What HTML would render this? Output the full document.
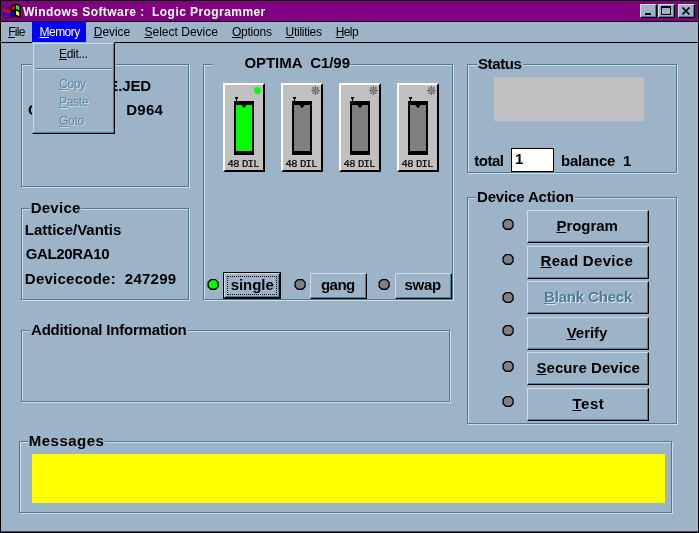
<!DOCTYPE html><html><head><meta charset="utf-8"><title>Windows Software : Logic Programmer</title><style>
html,body{margin:0;padding:0}
body{width:699px;height:533px;background:#000;position:relative;overflow:hidden;font-family:"Liberation Sans",sans-serif;color:#000}
.a{position:absolute}
.t{position:absolute;white-space:pre;font:bold 15px/16px "Liberation Sans",sans-serif}
.m{position:absolute;white-space:pre;font:12px/14px "Liberation Sans",sans-serif;top:25px}
.m u,.t u,.d u{text-decoration:underline;text-decoration-thickness:1px;text-underline-offset:1px}
.gd{position:absolute;border:1px solid #4E7C98;box-sizing:border-box}
.gl{position:absolute;border:1px solid #CCDDE6;box-sizing:border-box}
.lb{position:absolute;white-space:pre;font:bold 15px/16px "Liberation Sans",sans-serif;background:#9DB4C8;padding:0 1px}
.btn{position:absolute;box-sizing:border-box;background:#9DB4C8;border-top:1px solid #CCDDE6;border-left:1px solid #CCDDE6;border-right:1px solid #000;border-bottom:1px solid #000}
.btn i{position:absolute;left:0;top:0;right:0;bottom:0;border-right:1px solid #4E7C98;border-bottom:1px solid #4E7C98}
.sock{position:absolute;width:42px;height:89px;top:83px;box-sizing:border-box;background:#C0C0C0;border-top:2px solid #fff;border-left:2px solid #fff;border-right:2px solid #000;border-bottom:2px solid #000}
.sock .c{position:absolute;left:9px;top:16px;width:20px;height:54px;background:#000}
.sock .f{position:absolute;left:11px;top:20px;width:16px;height:46px;background:#808080}
.sock .s{position:absolute;left:2.6px;top:73px;white-space:pre;font:10.5px/12px "Liberation Mono",monospace;letter-spacing:-0.65px;word-spacing:-2.6px;-webkit-text-stroke:0.2px #000}
.d{position:absolute;white-space:pre;font:12px/14px "Liberation Sans",sans-serif;left:26px;letter-spacing:-0.3px}
</style></head><body><div id="w" style="position:absolute;left:0;top:0;width:699px;height:533px;will-change:transform">
<div class="a" style="left:1px;top:1px;width:697px;height:20px;background:#800080"></div>
<svg class="a" style="left:0;top:0" width="24" height="22" viewBox="0 0 24 22">
<path d="M10.6 6.2C12.5 3.6 16 3 20.7 5.6V18.6C17 16.2 13 16.4 10.6 18.6Z" fill="#000"/>
<path d="M12 7.4C12.8 6.2 13.8 5.6 14.8 5.4L14.6 9C13.6 9.2 12.8 9.6 12 10.2Z" fill="#f00"/>
<path d="M16 5.1C17.2 5.2 18.2 5.8 19.2 6.6V10.3C18.2 9.6 17.2 9.2 16 9.1Z" fill="#0f0"/>
<path d="M12 12.4C12.8 11.8 13.6 11.4 14.6 11.2L14.8 14.4C13.8 14.6 12.8 15.2 12 16Z" fill="#00f"/>
<path d="M16 11C17.2 11.1 18.2 11.6 19.2 12.4V16.2C18.2 15.4 17.2 14.9 16 14.8Z" fill="#ff0"/>
<path d="M3 9h1.5v1H6v.6h4.4v1.6H6.4V11.6H4.4V11H3Z" fill="#f00"/>
<path d="M3 12.4h1.5v1H6v.6h4.4v1.8H6.4V15.2H4.4V14.6H3Z" fill="#00f"/>
<path d="M3 6.2h1v1.6H3ZM5.4 7.6h1.6v.9H5.4ZM8 7h2v1H8ZM3 16.2h1v1.6H3ZM5.4 17.4h2v1H5.4ZM8.4 17h2v1H8.4Z" fill="#000"/>
</svg>
<div class="a" style="left:22.9px;top:4px;color:#fff;white-space:pre;font:bold 12px/16px 'Liberation Sans',sans-serif;letter-spacing:0.432px">Windows Software :  Logic Programmer</div>
<div class="btn" style="left:640px;top:4px;width:17px;height:14px"><i></i><div class="a" style="left:4px;top:8px;width:6px;height:2px;background:#000"></div></div>
<div class="btn" style="left:658px;top:4px;width:17px;height:14px"><i></i><div class="a" style="left:2px;top:1px;width:10px;height:9px;box-sizing:border-box;border:1px solid #000;border-top-width:2px"></div></div>
<div class="btn" style="left:678px;top:4px;width:17px;height:14px"><i></i><svg class="a" style="left:3px;top:2px" width="9" height="8" viewBox="0 0 9 8"><path d="M0.5 0.5L7.5 7.5M7.5 0.5L0.5 7.5" stroke="#000" stroke-width="1.6"/></svg></div>
<div class="a" style="left:1px;top:22px;width:697px;height:20px;background:#9DB4C8"></div>
<div class="a" style="left:32px;top:22px;width:54px;height:20px;background:#0000FF"></div>
<div class="m" style="left:8.2px;color:#000;letter-spacing:-0.687px"><u>F</u>ile</div>
<div class="m" style="left:39.6px;color:#fff;letter-spacing:-0.547px"><u>M</u>emory</div>
<div class="m" style="left:93.8px;color:#000;letter-spacing:-0.081px"><u>D</u>evice</div>
<div class="m" style="left:144.5px;color:#000;letter-spacing:0.009px"><u>S</u>elect Device</div>
<div class="m" style="left:231.9px;color:#000;letter-spacing:-0.209px"><u>O</u>ptions</div>
<div class="m" style="left:285.6px;color:#000;letter-spacing:-0.284px"><u>U</u>tilities</div>
<div class="m" style="left:335.7px;color:#000;letter-spacing:-0.602px"><u>H</u>elp</div>
<div class="a" style="left:1px;top:43px;width:697px;height:489px;background:#9DB4C8"></div><div class="a" style="left:1px;top:531px;width:697px;height:1px;background:rgba(0,0,0,0.55)"></div>
<div class="gl" style="left:22px;top:65px;width:168px;height:123px"></div><div class="gd" style="left:21px;top:64px;width:168px;height:123px"></div>
<div class="t" style="left:108.3px;top:78px;letter-spacing:-0.13px;">E.JED</div>
<div class="t" style="left:28.1px;top:102px;letter-spacing:0px;">C</div>
<div class="t" style="left:126.2px;top:102px;letter-spacing:0.261px;">D964</div>
<div class="gl" style="left:22px;top:209px;width:168px;height:92px"></div><div class="gd" style="left:21px;top:208px;width:168px;height:92px"></div>
<div class="lb" style="left:29.7px;top:200px;letter-spacing:0.255px;padding:0 0.74px 0 1px">Device</div>
<div class="t" style="left:24.8px;top:222px;letter-spacing:-0.02px;">Lattice/Vantis</div>
<div class="t" style="left:25.8px;top:246px;letter-spacing:-0.369px;">GAL20RA10</div>
<div class="t" style="left:24.8px;top:271px;letter-spacing:0.254px;">Devicecode:  247299</div>
<div class="gl" style="left:204px;top:65px;width:250px;height:236px"></div><div class="gd" style="left:203px;top:64px;width:250px;height:236px"></div>
<div class="lb" style="left:213.4px;top:55px;letter-spacing:-0.046px;padding:0 0.05px 0 31px">OPTIMA  C1/99</div>
<div class="sock" style="left:223px"><div class="c"></div><div class="f" style="background:#00FF00"></div><svg class="a" style="left:10px;top:12px" width="18" height="14" viewBox="0 0 18 14"><path d="M0 0H3V1.5L2 2.2V4H1V2.2L0 1.5Z" fill="#000"/><path d="M6.3 8H11.7L9 11.2Z" fill="#000"/></svg><svg class="a" style="left:28px;top:1px" width="9" height="9" viewBox="0 0 9 9"><g fill="#00FF00"><circle cx="7.90" cy="4.50" r="0.75"/><circle cx="6.90" cy="6.90" r="0.75"/><circle cx="4.50" cy="7.90" r="0.75"/><circle cx="2.10" cy="6.90" r="0.75"/><circle cx="1.10" cy="4.50" r="0.75"/><circle cx="2.10" cy="2.10" r="0.75"/><circle cx="4.50" cy="1.10" r="0.75"/><circle cx="6.90" cy="2.10" r="0.75"/><circle cx="4.5" cy="4.5" r="3.1"/></g></svg><div class="s">48 DIL</div></div>
<div class="sock" style="left:281px"><div class="c"></div><div class="f" style="background:#808080"></div><svg class="a" style="left:10px;top:12px" width="18" height="14" viewBox="0 0 18 14"><path d="M0 0H3V1.5L2 2.2V4H1V2.2L0 1.5Z" fill="#000"/><path d="M6.3 8H11.7L9 11.2Z" fill="#000"/></svg><svg class="a" style="left:28px;top:1px" width="9" height="9" viewBox="0 0 9 9"><g fill="#202020"><circle cx="7.90" cy="4.50" r="0.75"/><circle cx="6.90" cy="6.90" r="0.75"/><circle cx="4.50" cy="7.90" r="0.75"/><circle cx="2.10" cy="6.90" r="0.75"/><circle cx="1.10" cy="4.50" r="0.75"/><circle cx="2.10" cy="2.10" r="0.75"/><circle cx="4.50" cy="1.10" r="0.75"/><circle cx="6.90" cy="2.10" r="0.75"/></g><circle cx="4.5" cy="4.5" r="2.5" fill="#808080"/></svg><div class="s">48 DIL</div></div>
<div class="sock" style="left:339px"><div class="c"></div><div class="f" style="background:#808080"></div><svg class="a" style="left:10px;top:12px" width="18" height="14" viewBox="0 0 18 14"><path d="M0 0H3V1.5L2 2.2V4H1V2.2L0 1.5Z" fill="#000"/><path d="M6.3 8H11.7L9 11.2Z" fill="#000"/></svg><svg class="a" style="left:28px;top:1px" width="9" height="9" viewBox="0 0 9 9"><g fill="#202020"><circle cx="7.90" cy="4.50" r="0.75"/><circle cx="6.90" cy="6.90" r="0.75"/><circle cx="4.50" cy="7.90" r="0.75"/><circle cx="2.10" cy="6.90" r="0.75"/><circle cx="1.10" cy="4.50" r="0.75"/><circle cx="2.10" cy="2.10" r="0.75"/><circle cx="4.50" cy="1.10" r="0.75"/><circle cx="6.90" cy="2.10" r="0.75"/></g><circle cx="4.5" cy="4.5" r="2.5" fill="#808080"/></svg><div class="s">48 DIL</div></div>
<div class="sock" style="left:397px"><div class="c"></div><div class="f" style="background:#808080"></div><svg class="a" style="left:10px;top:12px" width="18" height="14" viewBox="0 0 18 14"><path d="M0 0H3V1.5L2 2.2V4H1V2.2L0 1.5Z" fill="#000"/><path d="M6.3 8H11.7L9 11.2Z" fill="#000"/></svg><svg class="a" style="left:28px;top:1px" width="9" height="9" viewBox="0 0 9 9"><g fill="#202020"><circle cx="7.90" cy="4.50" r="0.75"/><circle cx="6.90" cy="6.90" r="0.75"/><circle cx="4.50" cy="7.90" r="0.75"/><circle cx="2.10" cy="6.90" r="0.75"/><circle cx="1.10" cy="4.50" r="0.75"/><circle cx="2.10" cy="2.10" r="0.75"/><circle cx="4.50" cy="1.10" r="0.75"/><circle cx="6.90" cy="2.10" r="0.75"/></g><circle cx="4.5" cy="4.5" r="2.5" fill="#808080"/></svg><div class="s">48 DIL</div></div>
<svg class="a" style="left:207px;top:278px" width="12" height="12" viewBox="0 0 12 12"><path d="M3.9 1.65H8.5L11.05 4.2V8.7L8.5 11.25H3.9L1.15 8.7V4.2Z" fill="#00FF00" stroke="#000" stroke-width="1.3"/></svg>
<div class="a" style="left:223px;top:272px;width:58px;height:27px;background:#000"></div>
<div class="btn" style="left:224px;top:273px;width:56px;height:25px"><i></i><div class="a" style="left:2px;top:2px;width:48px;height:17px;border:1px dotted #000"></div></div>
<div class="t" style="left:230.7px;top:277px;letter-spacing:-0.04px;">single</div>
<svg class="a" style="left:294px;top:278px" width="12" height="12" viewBox="0 0 12 12"><path d="M3.9 1.65H8.5L11.05 4.2V8.7L8.5 11.25H3.9L1.15 8.7V4.2Z" fill="#808080" stroke="#000" stroke-width="1.3"/></svg>
<div class="btn" style="left:310px;top:273px;width:57px;height:26px"><i></i></div>
<div class="t" style="left:321px;top:277px;letter-spacing:-0.556px;">gang</div>
<svg class="a" style="left:378px;top:278px" width="12" height="12" viewBox="0 0 12 12"><path d="M3.9 1.65H8.5L11.05 4.2V8.7L8.5 11.25H3.9L1.15 8.7V4.2Z" fill="#808080" stroke="#000" stroke-width="1.3"/></svg>
<div class="btn" style="left:395px;top:273px;width:57px;height:26px"><i></i></div>
<div class="t" style="left:404.4px;top:277px;letter-spacing:-0.251px;">swap</div>
<div class="gl" style="left:468px;top:65px;width:210px;height:109px"></div><div class="gd" style="left:467px;top:64px;width:210px;height:109px"></div>
<div class="lb" style="left:477px;top:56px;letter-spacing:-0.38px;padding:0 1.38px 0 1px">Status</div>
<div class="a" style="left:494px;top:77px;width:150px;height:44px;background:#C0C0C0"></div>
<div class="t" style="left:474.2px;top:153px;letter-spacing:-0.474px;">total</div>
<div class="a" style="left:511px;top:148px;width:43px;height:24px;box-sizing:border-box;border:1px solid #000;background:#fff"></div>
<div class="t" style="left:514.9px;top:151px;letter-spacing:0px;">1</div>
<div class="t" style="left:561px;top:153px;letter-spacing:-0.244px;">balance  1</div>
<div class="gl" style="left:468px;top:198px;width:210px;height:227px"></div><div class="gd" style="left:467px;top:197px;width:210px;height:227px"></div>
<div class="lb" style="left:476px;top:189px;letter-spacing:-0.153px;padding:0 1.15px 0 1px">Device Action</div>
<svg class="a" style="left:502px;top:217.9px" width="12" height="12" viewBox="0 0 12 12"><path d="M3.9 1.65H8.5L11.05 4.2V8.7L8.5 11.25H3.9L1.15 8.7V4.2Z" fill="#808080" stroke="#000" stroke-width="1.3"/></svg>
<div class="btn" style="left:527px;top:210px;width:122px;height:33px"><i></i></div>
<div class="t" style="left:556.5px;top:218px;letter-spacing:-0.058px;"><u>P</u>rogram</div>
<svg class="a" style="left:502px;top:253.10000000000002px" width="12" height="12" viewBox="0 0 12 12"><path d="M3.9 1.65H8.5L11.05 4.2V8.7L8.5 11.25H3.9L1.15 8.7V4.2Z" fill="#808080" stroke="#000" stroke-width="1.3"/></svg>
<div class="btn" style="left:527px;top:246px;width:122px;height:33px"><i></i></div>
<div class="t" style="left:540.5px;top:253px;letter-spacing:0.303px;"><u>R</u>ead Device</div>
<svg class="a" style="left:502px;top:290.6px" width="12" height="12" viewBox="0 0 12 12"><path d="M3.9 1.65H8.5L11.05 4.2V8.7L8.5 11.25H3.9L1.15 8.7V4.2Z" fill="#808080" stroke="#000" stroke-width="1.3"/></svg>
<div class="btn" style="left:527px;top:281px;width:122px;height:33px"><i></i></div>
<div class="t" style="left:545px;top:290px;letter-spacing:-0.169px;color:#DCE8EE"><u>B</u>lank Check</div>
<div class="t" style="left:544px;top:289px;letter-spacing:-0.169px;color:#4E7C9A"><u>B</u>lank Check</div>
<svg class="a" style="left:502px;top:324.4px" width="12" height="12" viewBox="0 0 12 12"><path d="M3.9 1.65H8.5L11.05 4.2V8.7L8.5 11.25H3.9L1.15 8.7V4.2Z" fill="#808080" stroke="#000" stroke-width="1.3"/></svg>
<div class="btn" style="left:527px;top:317px;width:122px;height:33px"><i></i></div>
<div class="t" style="left:566.7px;top:325px;letter-spacing:-0.044px;"><u>V</u>erify</div>
<svg class="a" style="left:502px;top:359.8px" width="12" height="12" viewBox="0 0 12 12"><path d="M3.9 1.65H8.5L11.05 4.2V8.7L8.5 11.25H3.9L1.15 8.7V4.2Z" fill="#808080" stroke="#000" stroke-width="1.3"/></svg>
<div class="btn" style="left:527px;top:352px;width:122px;height:33px"><i></i></div>
<div class="t" style="left:536.4px;top:360px;letter-spacing:0.064px;"><u>S</u>ecure Device</div>
<svg class="a" style="left:502px;top:395.4px" width="12" height="12" viewBox="0 0 12 12"><path d="M3.9 1.65H8.5L11.05 4.2V8.7L8.5 11.25H3.9L1.15 8.7V4.2Z" fill="#808080" stroke="#000" stroke-width="1.3"/></svg>
<div class="btn" style="left:527px;top:388px;width:122px;height:33px"><i></i></div>
<div class="t" style="left:572.4px;top:396px;letter-spacing:0.555px;"><u>T</u>est</div>
<div class="gl" style="left:22px;top:331px;width:429px;height:72px"></div><div class="gd" style="left:21px;top:330px;width:429px;height:72px"></div>
<div class="lb" style="left:30px;top:322px;letter-spacing:-0.201px;padding:0 1.20px 0 1px">Additional Information</div>
<div class="gl" style="left:20px;top:442px;width:653px;height:72px"></div><div class="gd" style="left:19px;top:441px;width:653px;height:72px"></div>
<div class="lb" style="left:27.8px;top:433px;letter-spacing:0.476px;padding:0 0.52px 0 1px">Messages</div>
<div class="a" style="left:32px;top:454px;width:633px;height:49px;background:#FFFF00"></div>
<div class="a" style="left:1px;top:42px;width:697px;height:1px;background:#000"></div>
<div class="a" style="left:32px;top:42px;width:83px;height:92px;box-sizing:border-box;background:#9DB4C8;border-top:1px solid #9DB4C8;border-left:1px solid #9DB4C8;border-right:1px solid #000;border-bottom:1px solid #000"><div class="a" style="left:0;top:0;right:0;bottom:0;border-top:1px solid #CCDDE6;border-left:1px solid #CCDDE6;border-right:1px solid #4E7C98;border-bottom:1px solid #4E7C98"></div><div class="a" style="left:3px;top:25px;width:76px;height:1px;background:#4E7C98"></div><div class="a" style="left:3px;top:26px;width:76px;height:1px;background:#CCDDE6"></div><div class="d" style="top:4px"><u>E</u>dit...</div><div class="d" style="top:35px;left:27px;color:#CCDDE6"><u>C</u>opy</div><div class="d" style="top:34px;color:#5C88A6"><u>C</u>opy</div><div class="d" style="top:53px;left:27px;color:#CCDDE6"><u>P</u>aste</div><div class="d" style="top:52px;color:#5C88A6"><u>P</u>aste</div><div class="d" style="top:72px;left:27px;color:#CCDDE6"><u>G</u>oto</div><div class="d" style="top:71px;color:#5C88A6"><u>G</u>oto</div></div>
</div></body></html>
